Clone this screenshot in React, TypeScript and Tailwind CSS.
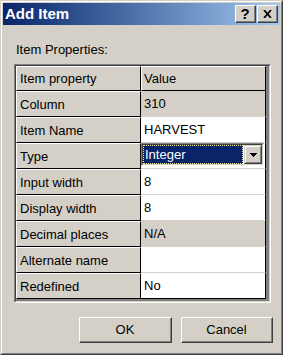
import React from "react";

const rows = [
  { label: "Column", value: "310", readOnly: true },
  { label: "Item Name", value: "HARVEST" },
  { label: "Type", value: "Integer", combo: true },
  { label: "Input width", value: "8" },
  { label: "Display width", value: "8" },
  { label: "Decimal places", value: "N/A", readOnly: true },
  { label: "Alternate name", value: "" },
  { label: "Redefined", value: "No" },
];

const CaptionButton = ({ children }: { children: React.ReactNode }) => (
  <div className="w-[21px] h-[18px] border border-t-white border-l-white border-r-[#404040] border-b-[#404040] bg-[#d4d0c8]">
    <div className="w-full h-full border-r border-b border-[#808080] flex items-center justify-center">
      {children}
    </div>
  </div>
);

const Button = ({ label, width }: { label: string; width: string }) => (
  <div
    className={`${width} h-[26px] border border-t-white border-l-white border-r-[#404040] border-b-[#404040] bg-[#d4d0c8]`}
  >
    <div className="w-full h-full border-r border-b border-[#808080] flex items-center justify-center text-[13px] text-black">
      {label}
    </div>
  </div>
);

const TypeCombo = ({ value }: { value: string }) => (
  <div className="w-[123px] h-[23px] border border-t-[#808080] border-l-[#808080] border-r-white border-b-white">
    <div className="w-full h-full border border-t-[#404040] border-l-[#404040] border-r-[#d4d0c8] border-b-[#d4d0c8] bg-white flex">
      <div className="flex-1 mr-px bg-[#0a246a] border border-dotted border-[#f0eaa0] flex items-center pl-[1px] text-white text-[13px]">
        {value}
      </div>
      <div className="w-[18px] h-full border border-t-[#d4d0c8] border-l-[#d4d0c8] border-r-[#404040] border-b-[#404040] bg-[#d4d0c8]">
        <div className="w-full h-full border border-t-white border-l-white border-r-[#808080] border-b-[#808080] flex items-center justify-center">
          <svg width="7" height="4" viewBox="0 0 7 4">
            <path d="M0 0h7v1H0zM1 1h5v1H1zM2 2h3v1H2zM3 3h1v1H3z" fill="#000" />
          </svg>
        </div>
      </div>
    </div>
  </div>
);

export default function App() {
  return (
    <div className="w-[283px] h-[355px] font-['Liberation_Sans',Arial,sans-serif] text-[13px] leading-[15px] text-black">
      <div className="w-full h-full border border-t-[#d4d0c8] border-l-[#d4d0c8] border-r-[#404040] border-b-[#404040] bg-[#d4d0c8]">
        <div className="w-full h-full border border-t-white border-l-white border-r-[#808080] border-b-[#808080] p-px flex flex-col">
          {/* title bar */}
          <div className="h-[22px] bg-linear-to-r from-[#0a246a] to-[#a6caf0] flex items-center pl-[2px] pr-[2px]">
            <span className="flex-1 text-white font-bold text-[15px] leading-[18px]">Add Item</span>
            <div className="flex gap-px">
              <CaptionButton>
                <span className="font-bold text-[15px] leading-[15px] text-black">?</span>
              </CaptionButton>
              <CaptionButton>
                <svg width="9" height="8" viewBox="0 0 9 8">
                  <path d="M1 0L8 8M8 0L1 8" stroke="#000" strokeWidth="1.8" />
                </svg>
              </CaptionButton>
            </div>
          </div>

          <div className="pt-[17px] pl-[13px]">Item Properties:</div>

          {/* property grid */}
          <div className="mt-[7px] ml-[11px] w-[257px] border border-t-[#808080] border-l-[#808080] border-r-white border-b-white">
            <div className="border border-t-[#404040] border-l-[#404040] border-r-[#d4d0c8] border-b-[#d4d0c8] bg-[#808080] pr-[3px] pb-[2px]">
              <div className="flex h-[25px]">
                <div className="w-[125px] bg-[#d4d0c8] border-t border-l border-t-white border-l-white border-b border-r border-b-black border-r-black flex items-center pl-[3px]">
                  Item property
                </div>
                <div className="w-[125px] bg-[#d4d0c8] border-t border-l border-t-white border-l-white border-b border-r border-b-black border-r-black flex items-center pl-[2px]">
                  Value
                </div>
              </div>
              {rows.map((row, i) => {
                const last = i === rows.length - 1;
                return (
                  <div key={row.label} className="flex h-[26px]">
                    <div className="w-[125px] bg-[#d4d0c8] border-t border-l border-t-white border-l-white border-b border-r border-b-black border-r-black flex items-center pl-[3px]">
                      {row.label}
                    </div>
                    <div
                      className={`w-[125px] border-r border-r-black border-b ${
                        last ? "border-b-black" : "border-b-[#d4d0c8]"
                      } ${row.readOnly ? "bg-[#d4d0c8]" : "bg-white"} ${
                        row.combo ? "flex items-start" : "flex items-center pl-[3px]"
                      }`}
                    >
                      {row.combo ? <TypeCombo value={row.value} /> : row.value}
                    </div>
                  </div>
                );
              })}
            </div>
          </div>

          {/* buttons */}
          <div className="mt-[14px] flex justify-end gap-[9px] pr-[7px]">
            <Button label="OK" width="w-[93px]" />
            <Button label="Cancel" width="w-[92px]" />
          </div>
        </div>
      </div>
    </div>
  );
}
